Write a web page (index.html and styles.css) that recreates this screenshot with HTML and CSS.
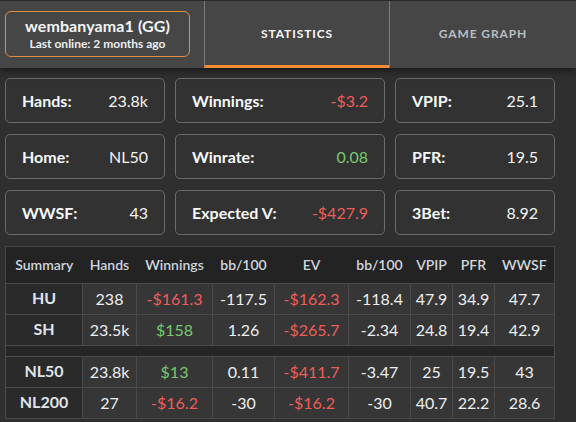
FILE: index.html
```html
<!DOCTYPE html>
<html>
<head>
<meta charset="utf-8">
<link rel="stylesheet" href="styles.css">
</head>
<body>
<header class="header">
  <div class="profile-wrap">
    <div class="profile">
      <div class="profile-name">wembanyama1 (GG)</div>
      <div class="profile-sub">Last online: 2 months ago</div>
    </div>
  </div>
  <div class="tab tab-active">STATISTICS</div>
  <div class="tab tab-last">GAME GRAPH</div>
</header>
<main class="main">
  <section class="cards">
    <div class="card card-s"><span class="label">Hands:</span><span class="value">23.8k</span></div>
    <div class="card"><span class="label">Winnings:</span><span class="value neg">-$3.2</span></div>
    <div class="card card-s"><span class="label">VPIP:</span><span class="value">25.1</span></div>
    <div class="card card-s"><span class="label">Home:</span><span class="value">NL50</span></div>
    <div class="card"><span class="label">Winrate:</span><span class="value pos">0.08</span></div>
    <div class="card card-s"><span class="label">PFR:</span><span class="value">19.5</span></div>
    <div class="card card-s"><span class="label">WWSF:</span><span class="value">43</span></div>
    <div class="card"><span class="label">Expected V:</span><span class="value neg">-$427.9</span></div>
    <div class="card card-s"><span class="label">3Bet:</span><span class="value">8.92</span></div>
  </section>
  <table class="summary">
    <colgroup>
      <col class="c77"><col class="c54"><col class="c76"><col class="c62"><col class="c74"><col class="c62"><col class="c42"><col class="c42"><col class="c60">
    </colgroup>
    <thead>
      <tr><th>Summary</th><th>Hands</th><th>Winnings</th><th>bb/100</th><th>EV</th><th>bb/100</th><th>VPIP</th><th>PFR</th><th>WWSF</th></tr>
    </thead>
    <tbody>
      <tr><td class="rowhead">HU</td><td>238</td><td class="neg">-$161.3</td><td>-117.5</td><td class="neg">-$162.3</td><td>-118.4</td><td>47.9</td><td>34.9</td><td>47.7</td></tr>
      <tr><td class="rowhead">SH</td><td>23.5k</td><td class="pos">$158</td><td>1.26</td><td class="neg">-$265.7</td><td>-2.34</td><td>24.8</td><td>19.4</td><td>42.9</td></tr>
      <tr class="sep"><td colspan="9"></td></tr>
      <tr><td class="rowhead">NL50</td><td>23.8k</td><td class="pos">$13</td><td>0.11</td><td class="neg">-$411.7</td><td>-3.47</td><td>25</td><td>19.5</td><td>43</td></tr>
      <tr><td class="rowhead">NL200</td><td>27</td><td class="neg">-$16.2</td><td>-30</td><td class="neg">-$16.2</td><td>-30</td><td>40.7</td><td>22.2</td><td>28.6</td></tr>
    </tbody>
  </table>
</main>
</body>
</html>
```
FILE: styles.css
```css
html, body {
  margin: 0;
  padding: 0;
}
body {
  background: #2f2f2f;
  font-family: Lato, "Liberation Sans", sans-serif;
  color: #f2f2f2;
  width: 576px;
  height: 422px;
  overflow: hidden;
}
.header {
  display: flex;
  height: 67px;
  border-top: 1px solid #2a2a2a;
  background: #464646;
  box-shadow: 0 2px 8px rgba(0, 0, 0, 0.55);
  position: relative;
  z-index: 1;
}
.profile-wrap {
  width: 204px;
  box-sizing: border-box;
  padding: 10px 14px 0 5px;
}
.profile {
  height: 46px;
  box-sizing: border-box;
  border: 1px solid #e38d3f;
  border-radius: 6px;
  display: flex;
  flex-direction: column;
  align-items: center;
  justify-content: center;
  padding-bottom: 2px;
}
.profile-name {
  font-size: 16px;
  font-weight: 700;
  color: #f4f6f8;
  line-height: 19px;
  letter-spacing: 0.1px;
}
.profile-sub {
  font-size: 12px;
  font-weight: 700;
  color: #eceef0;
  line-height: 15px;
  margin-top: 1px;
}
.tab {
  width: 185px;
  box-sizing: border-box;
  border-left: 1px solid #7a7a7a;
  display: flex;
  align-items: center;
  justify-content: center;
  font-size: 12px;
  font-weight: 700;
  letter-spacing: 0.9px;
  color: #b9bdc1;
  padding-bottom: 3px;
}
.tab-active {
  color: #f6f8fa;
  border-bottom: 3px solid #f28c34;
  padding-bottom: 0;
}
.tab-last {
  flex: 1;
}
.main {
  padding: 10px 0 0 5px;
}
.cards {
  display: grid;
  grid-template-columns: 160px 210px 160px;
  grid-auto-rows: 45px;
  column-gap: 10px;
  row-gap: 11px;
}
.card {
  box-sizing: border-box;
  border: 1px solid #6a6a6a;
  border-radius: 5px;
  background: #323232;
  display: flex;
  align-items: center;
  justify-content: space-between;
  padding: 0 16px 0 16px;
  font-size: 16px;
}
.label {
  font-weight: 700;
  color: #f6f8fa;
}
.value {
  color: #f2f2f2;
}
.neg {
  color: #ef5d58;
}
.pos {
  color: #79c86e;
}
.summary {
  margin-top: 11px;
  width: 550px;
  table-layout: fixed;
  border-collapse: collapse;
  border: 1px solid #474747;
  font-size: 16px;
  line-height: 18px;
  text-align: center;
}
.c77 { width: 77px; }
.c54 { width: 54px; }
.c76 { width: 76px; }
.c62 { width: 62px; }
.c74 { width: 74px; }
.c42 { width: 42px; }
.c60 { width: 60px; }
.summary th {
  height: 36px;
  background: #232323;
  font-size: 14px;
  font-weight: 600;
  color: #cfd6dd;
  padding: 0;
  border-bottom: 1px solid #4a4a4a;
}
.summary td {
  height: 30px;
  padding: 0;
  background: #363636;
  border: 1px solid #4a4a4a;
  color: #eceef0;
  white-space: nowrap;
}
.summary td.rowhead {
  background: #2a2a2a;
  font-weight: 700;
  color: #dfe4ea;
  vertical-align: top;
  padding-top: 5px;
  height: 25px;
}
.summary td.neg { color: #ef5d58; }
.summary td.pos { color: #79c86e; }
.summary tr.sep td {
  height: 10px;
  background: #262626;
  padding: 0;
}
```
